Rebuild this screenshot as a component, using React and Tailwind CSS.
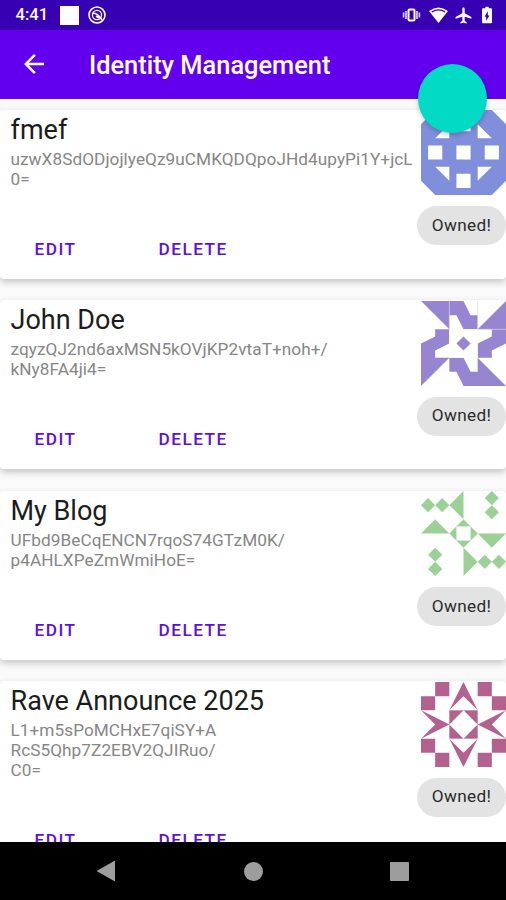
import React from "react";

function Diamond({ cx, cy }) {
  return <path d={`M${cx} ${cy - 0.5}l.5 .5l-.5 .5l-.5 -.5z`} />;
}

function Octagon() {
  return (
    <g>
      <path fill="#7f8fdb" d="M1 0H5L6 1V5L5 6H1L0 5V1z" />
      <g fill="#fff">
        <path d="M.5 2.5h1v1h-1zM2.5 2.5h1v1h-1zM4.5 2.5h1v1h-1zM2.5 4.5h1v1h-1zM2.5 .5h1v1h-1z" />
        <path d="M1 4H2V5zM4 4H5L4 5zM1 2H2V1zM4 1V2H5z" />
      </g>
    </g>
  );
}

function Star() {
  return (
    <g fill="#9785d1">
      {[0, 90, 180, 270].map((a) => (
        <path key={a} transform={`rotate(${a} 3 3)`} d="M0 0H3L3.5 1H4V2H2z" />
      ))}
      <path fill="#fff" d="M2 1H2.5L3 2H5V2.5L4 3V5H3.5L3 4H1V3.5L2 3z" />
      <Diamond cx={3} cy={3} />
      <path d="M2 0V2M4 0V2H6" fill="none" stroke="#d9d2f0" strokeWidth="0.05" />
    </g>
  );
}

function Leaves() {
  const dots = [[0.5, 1], [1.5, 1], [5, 0.5], [5, 1.5], [4.5, 5], [5.5, 5], [1, 4.5], [1, 5.5]];
  return (
    <g fill="#9bd196">
      {dots.map(([x, y]) => (
        <Diamond key={`${x}-${y}`} cx={x} cy={y} />
      ))}
      <path d="M3 0V2L2 1zM0 3H2L1 2zM4 3H6L5 4zM3 4V6L4 5zM3 2L4 3L3 4L2 3z" />
      <path fill="#fff" d="M2.5 2.5h1v1h-1z" />
    </g>
  );
}

function Spikes() {
  return (
    <g fill="#b3628f">
      <path d="M1 0h1v1h-1zM0 1h1v1h-1zM4 0h1v1h-1zM5 1h1v1h-1zM0 4h1v1h-1zM1 5h1v1h-1zM4 5h1v1h-1zM5 4h1v1h-1z" />
      <path d="M3 0L4 2L3 1L2 2zM3 6L2 4L3 5L4 4zM2 3L0 2L1 3L0 4zM4 3L6 2L5 3L6 4z" />
      <path d="M2 2h2v2h-2z" />
      <path fill="#fff" d="M3 2L4 3L3 4L2 3z" />
    </g>
  );
}

const identities = [
  { name: "fmef", lines: ["uzwX8SdODjojlyeQz9uCMKQDQpoJHd4upyPi1Y+jcL", "0="], Art: Octagon },
  { name: "John Doe", lines: ["zqyzQJ2nd6axMSN5kOVjKP2vtaT+noh+/", "kNy8FA4ji4="], Art: Star },
  { name: "My Blog", lines: ["UFbd9BeCqENCN7rqoS74GTzM0K/", "p4AHLXPeZmWmiHoE="], Art: Leaves },
  { name: "Rave Announce 2025", lines: ["L1+m5sPoMCHxE7qiSY+A", "RcS5Qhp7Z2EBV2QJIRuo/", "C0="], Art: Spikes },
];

function Card({ name, lines, Art }) {
  return (
    <article className="flex shrink-0 rounded-[4px] bg-white pb-[11px] shadow-[0_3px_7px_rgba(0,0,0,0.22)]">
      <div className="flex w-[417px] flex-col pl-[10.5px]">
        <h2 className="mt-[3px] h-[34px] whitespace-nowrap text-[27px] leading-[34px] text-[#1c1c1c]">{name}</h2>
        <div className="mt-[2px] pb-[41px] text-[17.2px] leading-[20px] tracking-[0.06px] text-[#868686]">
          {lines.map((l) => (
            <div key={l} className="whitespace-nowrap">{l}</div>
          ))}
        </div>
        <div className="flex text-[17.2px] font-medium leading-[38px] tracking-[1.5px] text-[#5b10e2]">
          <button className="w-[124px] pl-[24px] text-left">EDIT</button>
          <button className="pl-[24px] text-left">DELETE</button>
        </div>
      </div>
      <div className="flex w-[89px] flex-col items-end">
        <svg className="mr-[0.5px] mt-[0.5px] h-[85px] w-[85px]" viewBox="0 0 6 6">
          <Art />
        </svg>
        <div className="mt-[11px] flex h-[39px] w-[89px] items-center justify-center rounded-full bg-[#e3e3e3] text-[17.2px] tracking-[0.35px] text-[#2b2b2b]">
          Owned!
        </div>
      </div>
    </article>
  );
}

export default function App() {
  return (
    <div className="relative flex h-[900px] w-[506px] flex-col overflow-hidden bg-[#fafafa] font-['Roboto',sans-serif]">
      <div className="flex h-[30px] shrink-0 items-center bg-[#3700b3] text-white">
        <span className="w-[60px] pl-[15.5px] pt-[1px] text-[16.6px] font-medium">4:41</span>
        <span className="h-[19px] w-[19px] bg-white" />
        <svg className="ml-[9px] h-[18px] w-[18px]" viewBox="0 0 18 18" fill="none" stroke="#fff">
          <circle cx="9" cy="9" r="8" strokeWidth="1.6" />
          <circle cx="9" cy="9" r="4.6" strokeWidth="1.3" />
          <path d="M4.500 7.500Q9 6 13.800 13.800M8 10L11 12" strokeWidth="1.700" />
        </svg>
        <svg className="ml-[296px] h-[18px] w-[19px]" viewBox="0 0 19 18">
          <rect x="6.5" y="3.500" width="6" height="11" rx="1" fill="none" stroke="#fff" strokeWidth="2" />
          <path d="M4 5v8M1.600 6.500v5M15 5v8M17.400 6.500v5" stroke="#fff" strokeWidth="1.700" opacity=".8" />
        </svg>
        <svg className="ml-[8px] h-[18px] w-[19px]" viewBox="0 0 19 18" fill="#fff">
          <path d="M0 5Q9.500 -2 19 5L9.500 17z" />
          <path d="M2.800 6Q9.500 1.800 16.200 6" fill="none" stroke="#3700b3" strokeWidth="1.300" />
        </svg>
        <svg className="ml-[5.500px] h-[19px] w-[19px]" viewBox="0 0 24 24" fill="#fff">
          <path d="M22 16v-2l-8.500-5V3.500c0-.83-.67-1.500-1.500-1.500s-1.500.67-1.500 1.500V9L2 14v2l8.500-2.500V19L8 20.500V22l4-1 4 1v-1.500L13.500 19v-5.500L22 16z" />
        </svg>
        <svg className="ml-[4.500px] h-[20px] w-[20px]" viewBox="0 0 24 24" fill="#fff">
          <path d="M16.500 4H14V2h-4v2H7.500C6.600 4 6 4.600 6 5.330v15.330C6 21.400 6.600 22 7.500 22h9c.9 0 1.500-.6 1.500-1.330V5.330C18 4.600 17.400 4 16.500 4zM11 19v-5H9L13 7.500v5h2L11 19z" />
        </svg>
      </div>
      <header className="z-10 flex h-[69px] shrink-0 items-center bg-[#6200ee] text-white">
        <svg className="ml-[19px] mt-[-1px] h-[30px] w-[30px]" viewBox="0 0 24 24" fill="#fff">
          <path d="M20 11H7.830l5.590-5.590L12 4l-8 8 8 8 1.410-1.410L7.830 13H20v-2z" />
        </svg>
        <h1 className="ml-[40px] mt-[2px] text-[25.400px] font-medium">Identity Management</h1>
      </header>
      <main className="flex min-h-0 flex-1 flex-col gap-[21.600px] overflow-hidden pt-[10.500px]">
        {identities.map((i) => (
          <Card key={i.name} {...i} />
        ))}
      </main>
      <nav className="z-10 flex h-[58px] shrink-0 items-center bg-black">
        <svg className="ml-[96px] h-[22px] w-[20px]" viewBox="0 0 20 22">
          <path d="M0.500 11L19 0.500V21.500z" fill="#9d9d9d" />
        </svg>
        <span className="ml-[128px] h-[19px] w-[19px] rounded-full bg-[#9d9d9d]" />
        <span className="ml-[127px] h-[19px] w-[19px] rounded-[1px] bg-[#9d9d9d]" />
      </nav>
      <button aria-label="Add identity" className="absolute left-[418px] top-[64px] z-20 h-[69px] w-[69px] rounded-full bg-[#03dac5] shadow-[0_2px_5px_rgba(0,0,0,0.22)]" />
    </div>
  );
}
